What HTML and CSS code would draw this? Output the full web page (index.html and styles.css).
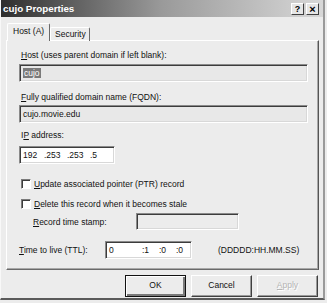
FILE: index.html
```html
<!DOCTYPE html>
<html lang="en">
<head>
  <meta charset="UTF-8" />
  <title>cujo Properties</title>
  <link rel="stylesheet" href="styles.css">
</head>
<body>

  <div class="window">

    <!-- Title bar -->
    <div class="titlebar">
      <span class="title">cujo Properties</span>
      <div class="title-btns">
        <span class="tbtn">?</span>
        <span class="tbtn close">×</span>
      </div>
    </div>

    <div class="content">
      <div class="tabs">
        <div class="tab active">Host (A)</div>
        <div class="tab">Security</div>
      </div>

      <div class="panel">
        <div class="label"><u>H</u>ost (uses parent domain if left blank):</div>
        <div class="field readonly wide"><span class="selected">cujo</span></div>

        <div class="label gap-fqdn"><u>F</u>ully qualified domain name (FQDN):</div>
        <div class="field readonly wide fqdn">cujo.movie.edu</div>

        <div class="label gap-ip">I<u>P</u> address:</div>
        <div class="field ip">
          <span class="oct">192</span><span class="oct">.253</span><span class="oct">.253</span><span>.5</span>
        </div>

        <div class="check first"><span class="box"></span><span><u>U</u>pdate associated pointer (PTR) record</span></div>
        <div class="check second"><span class="box"></span><span><u>D</u>elete this record when it becomes stale</span></div>

        <div class="stamp-row">
          <span class="stamp-label"><u>R</u>ecord time stamp:</span>
          <span class="field stamp"></span>
        </div>

        <div class="ttl-row">
          <span class="ttl-label"><u>T</u>ime to live (TTL):</span>
          <span class="field ttl">
            <span class="days">0</span><span class="part">:1</span><span class="part">:0</span><span>:0</span>
          </span>
          <span class="ttl-hint">(DDDDD:HH.MM.SS)</span>
        </div>
      </div>

      <div class="buttons">
        <div class="btn default">OK</div>
        <div class="btn">Cancel</div>
        <div class="btn disabled"><u>A</u>pply</div>
      </div>
    </div>

  </div>

</body>
</html>
```

FILE: styles.css
```css
body {
  margin: 0;
  padding: 0;
  background: #ececec;
  font-family: "Liberation Sans", Arial, sans-serif;
  font-size: 8.5px;
  color: #111;
}

.window {
  width: 325px;
  height: 300px;
  background: #ececec;
  border-right: 2px solid #9a9a9a;
  border-bottom: 2px solid #5a5a5a;
  box-sizing: border-box;
  border-left: 1px solid #f8f8f8;
}

/* Title bar */
.titlebar {
  height: 17px;
  display: flex;
  align-items: center;
  justify-content: space-between;
  background: linear-gradient(to right, #2e2e2e, #5a5a5a 20%, #9a9a9a 50%, #d8d8d8);
  padding: 0 4px 0 2px;
}

.title {
  color: #fff;
  font-weight: bold;
  font-size: 9.8px;
}

.title-btns {
  display: flex;
  gap: 2px;
}

.tbtn {
  width: 11px;
  height: 10px;
  background: #e6e6e6;
  border: 1px solid;
  border-color: #fff #404040 #404040 #fff;
  font-weight: bold;
  font-size: 9px;
  line-height: 10px;
  text-align: center;
  color: #000;
}

.tbtn.close {
  font-size: 11px;
}

.content {
  padding: 6px 4px 0 5px;
}

/* Tabs */
.tabs {
  display: flex;
  align-items: flex-end;
  height: 17px;
  position: relative;
  z-index: 1;
  padding-left: 1px;
}

.tab {
  height: 13px;
  line-height: 13px;
  padding: 0 3px 0 4px;
  border: 1px solid;
  border-color: #fff #6a6a6a transparent #fff;
  border-bottom: none;
  border-radius: 2px 2px 0 0;
  margin-bottom: -1px;
  width: 31px;
  white-space: nowrap;
}

.tab.active {
  height: 17px;
  line-height: 15px;
  width: 32px;
  background: #ececec;
  padding: 0 4px 0 5px;
}

.panel {
  height: 230px;
  box-sizing: border-box;
  border: 1px solid;
  border-color: #fff #555 #6a6a6a #fff;
  box-shadow: inset -1px -1px 0 #a8a8a8;
  padding: 9px 10px 0 12px;
}

.label {
  height: 11px;
  line-height: 11px;
  padding-left: 2px;
}

.gap-fqdn { margin-top: 10px; }
.gap-ip { margin-top: 7px; }

.field {
  display: block;
  box-sizing: border-box;
  height: 18px;
  line-height: 14px;
  border: 1px solid;
  border-color: #8a8a8a #fff #fff #8a8a8a;
  box-shadow: inset 1px 1px 0 #3c3c3c, inset -1px -1px 0 #d8d8d8;
  padding: 1px 3px;
  background: #fff;
}

.field.readonly {
  background: #e8e8e8;
}

.wide {
  margin-top: 3px;
  width: 289px;
}

.fqdn {
  margin-top: 2px;
}

.ip {
  display: flex;
  margin-top: 5px;
  width: 96px;
}

.oct {
  width: 23px;
}

.oct:first-child {
  width: 21px;
}

.selected {
  background: #7a7a7a;
  color: #fff;
  padding: 0 1px;
}

/* Checkboxes */
.check {
  display: flex;
  align-items: center;
  height: 11px;
  gap: 3px;
  padding-left: 2px;
}

.check.first { margin-top: 14px; }
.check.second { margin-top: 9px; }

.box {
  width: 8px;
  height: 8px;
  background: #fff;
  border: 1px solid;
  border-color: #7a7a7a #fff #fff #7a7a7a;
  box-shadow: inset 1px 1px 0 #3c3c3c;
}

.stamp-row {
  display: flex;
  align-items: center;
  margin-top: 4px;
  padding-left: 14px;
}

.stamp-label {
  width: 103px;
}

.field.stamp {
  width: 103px;
  height: 17px;
  background: #ececec;
}

.ttl-row {
  display: flex;
  align-items: center;
  margin-top: 11px;
}

.ttl-label {
  width: 86px;
}

.field.ttl {
  width: 87px;
  display: flex;
}

.days {
  width: 33px;
}

.part {
  width: 17px;
}

.ttl-hint {
  margin-left: 26px;
}

/* Buttons */
.buttons {
  display: flex;
  justify-content: flex-end;
  gap: 5px;
  margin-top: 5px;
  padding-right: 1px;
}

.btn {
  width: 61px;
  height: 22px;
  box-sizing: border-box;
  line-height: 18px;
  text-align: center;
  border: 1px solid;
  border-color: #fff #404040 #404040 #fff;
  box-shadow: inset -1px -1px 0 #9a9a9a;
}

.btn.default {
  border: 1px solid #111;
  box-shadow: inset 1px 1px 0 #fff, inset -2px -2px 0 #7a7a7a;
}

.btn.disabled {
  color: #b4b4b4;
  text-shadow: 1px 1px 0 #fff;
}
```
